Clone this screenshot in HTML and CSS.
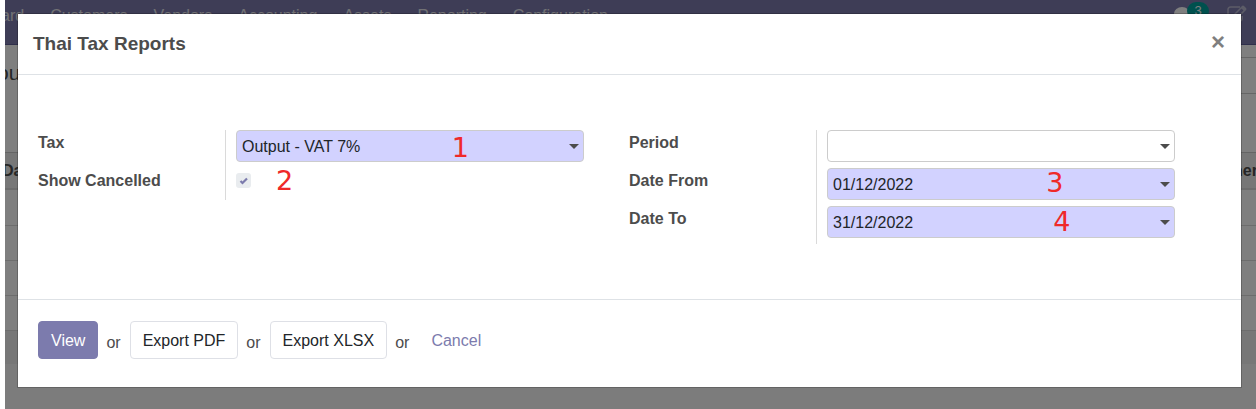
FILE: index.html
```html
<!DOCTYPE html>
<html lang="en">
<head>
<meta charset="utf-8">
<title>Thai Tax Reports</title>
<link rel="stylesheet" href="styles.css">
</head>
<body>
<div class="app">
  <header class="navbar">
    <nav class="menu">
      <span>ard</span><span>Customers</span><span>Vendors</span><span>Accounting</span><span>Assets</span><span>Reporting</span><span>Configuration</span>
    </nav>
    <div class="systray">
      <svg class="chat" viewBox="0 0 18 14" width="18" height="14" aria-hidden="true"><ellipse cx="8" cy="6.5" rx="8" ry="6.5" fill="#fff"/></svg>
      <span class="badge">3</span>
      <svg class="edit" viewBox="0 0 20 18" width="20" height="18" aria-hidden="true"><path d="M13 2H3.500a2.500 2.500 0 0 0-2.500 2.500v9A2.500 2.500 0 0 0 3.500 16h9a2.500 2.500 0 0 0 2.500-2.500V11" fill="none" stroke="#b9b8cf" stroke-width="1.500"/><path d="M8 9l7.500-7.500 3 3L11 12H8z" fill="none" stroke="#b9b8cf" stroke-width="1.500"/><path d="M14 3l3 3 2.500-2.500-3-3z" fill="#b9b8cf"/></svg>
    </div>
  </header>
  <div class="panel"><span class="crumb">ou</span><span class="filter"></span></div>
  <div class="list">
    <div class="list-head"><span class="date">Da</span><span class="partner">ner</span></div>
    <div class="line"></div><div class="line"></div><div class="line"></div><div class="line"></div>
    <div class="list-foot"></div>
  </div>
</div>
<div class="backdrop">
  <form class="modal" role="dialog" aria-labelledby="title">
    <header class="modal-head">
      <h4 id="title">Thai Tax Reports</h4>
      <button type="button" class="close" aria-label="Close">×</button>
    </header>
    <main class="modal-body">
      <div class="group">
        <div class="labels">
          <label for="tax">Tax</label>
          <label for="cancelled">Show Cancelled</label>
        </div>
        <div class="fields short">
          <div class="field"><select id="tax" class="control required"><option>Output - VAT 7%</option></select><span class="mark one">1</span></div>
          <div class="check"><input type="checkbox" id="cancelled" checked><svg viewBox="0 0 15 15" width="15" height="15" aria-hidden="true"><path d="M4.500 8l2 2L11 5.500" fill="none" stroke="#7c7bad" stroke-width="2.200"/></svg><span class="mark two">2</span></div>
        </div>
      </div>
      <div class="group">
        <div class="labels">
          <label for="period">Period</label>
          <label for="from">Date From</label>
          <label for="to">Date To</label>
        </div>
        <div class="fields">
          <div class="field"><select id="period" class="control"><option></option></select></div>
          <div class="field"><input type="text" id="from" class="control required" value="01/12/2022"><span class="mark three">3</span></div>
          <div class="field"><input type="text" id="to" class="control required" value="31/12/2022"><span class="mark four">4</span></div>
        </div>
      </div>
    </main>
    <footer class="modal-foot">
      <button type="button" class="btn primary">View</button>
      <span class="or">or</span>
      <button type="button" class="btn">Export PDF</button>
      <span class="or">or</span>
      <button type="button" class="btn">Export XLSX</button>
      <span class="or">or</span>
      <button type="button" class="btn link">Cancel</button>
    </footer>
  </form>
</div>
</body>
</html>
```

FILE: styles.css
```css
* { box-sizing: border-box; }
body {
  margin: 0;
  min-height: 100vh;
  padding-left: 5px;
  background: #fff;
  color: #4c4c4c;
  font: 16px/24px "Liberation Sans", Arial, sans-serif;
  overflow: hidden;
}
button, input, select { font: inherit; color: inherit; margin: 0; }

.app { height: 100vh; overflow: hidden; background: #f9f9f9; }
.navbar {
  display: flex;
  justify-content: space-between;
  height: 45px;
  overflow: hidden;
  background: #7c7bad;
  border-bottom: 1px solid #5f5e97;
  color: #e4e4ea;
}
.menu { display: flex; gap: 26px; margin-left: -4px; padding-top: 4px; }
.systray { display: flex; align-items: flex-start; padding: 2px 9px 0 0; }
.chat { margin-top: 5px; }
.badge {
  width: 22px;
  height: 18px;
  margin: 0 18px 0 -5px;
  border-radius: 9px;
  background: #00a09d;
  color: #fff;
  font-size: 13px;
  line-height: 18px;
  text-align: center;
}
.edit { margin-top: 3px; }

.panel {
  display: flex;
  justify-content: space-between;
  align-items: flex-start;
  height: 107px;
  padding-top: 12px;
  background: #fff;
}
.crumb { margin-left: -8px; padding-top: 4px; font-size: 21px; }
.filter { width: 40px; height: 37px; border: solid #ccc; border-width: 1px 0; }
.list-head {
  display: flex;
  justify-content: space-between;
  height: 38px;
  padding-top: 6px;
  overflow: hidden;
  background: #eee;
  border-top: 1px solid #cacaca;
  border-bottom: 2px solid #dadada;
  font-weight: bold;
}
.date { margin-left: -3px; }
.partner { margin-right: -2px; }
.line { height: 35px; background: #fff; border-bottom: 1px solid #dadada; }
.line:nth-child(2) { height: 36px; }
.list-foot { height: 33px; background: #eee; }

.backdrop {
  position: absolute;
  inset: 0 0 0 5px;
  padding: 13px 14px 21px 12px;
  background: rgba(0, 0, 0, 0.5);
}
.modal {
  display: flex;
  flex-direction: column;
  height: 100%;
  background: #fff;
  background-clip: padding-box;
  border: 1px solid rgba(0, 0, 0, 0.2);
}
.modal-head {
  display: flex;
  justify-content: space-between;
  align-items: flex-start;
  padding: 15px;
  border-bottom: 1px solid #dee2e6;
}
h4 { margin: 0; font-size: 19px; line-height: 30px; }
.close {
  padding: 0 1px;
  border: 0;
  background: none;
  color: #7f7f7f;
  font-size: 24px;
  font-weight: bold;
  line-height: 26px;
}
.modal-body {
  flex: 1;
  display: grid;
  grid-template-columns: 1fr 1fr;
  gap: 45px;
  align-items: start;
  padding: 55px 66px 55px 20px;
}
.group { display: grid; grid-template-columns: 187px 1fr; align-items: start; }
.labels { display: grid; grid-auto-rows: 38px; line-height: 26px; font-weight: bold; }
.fields {
  display: grid;
  grid-auto-rows: 32px;
  gap: 6px;
  padding: 0 0 6px 10px;
  border-left: 1px solid #dadada;
}
.short { padding-bottom: 0; }
.field { position: relative; }
.field::after {
  content: "";
  position: absolute;
  right: 5px;
  top: 14px;
  border: solid transparent;
  border-width: 5px 5px 0;
  border-top-color: #4c4c4c;
  pointer-events: none;
}
.control {
  appearance: none;
  display: block;
  width: 100%;
  height: 32px;
  padding: 2px 5px 0;
  border: 1px solid #ccc;
  border-radius: 4px;
  background: #fff;
  color: #212529;
}
.required { background: #d2d2ff; }
.check { position: relative; padding-top: 5px; }
.check input {
  appearance: none;
  display: block;
  width: 15px;
  height: 15px;
  border-radius: 3px;
  background: #e9ecef;
}
.check svg { position: absolute; left: 0; top: 5px; pointer-events: none; }
.mark {
  position: absolute;
  color: #ef2929;
  font: 27px/32px "DejaVu Sans", sans-serif;
  pointer-events: none;
}
.one { top: 2px; left: 62%; }
.two { top: -3px; left: 40px; }
.three { top: -1px; left: 63%; }
.four { top: 0; left: 65%; }

.modal-foot {
  display: flex;
  gap: 8px;
  padding: 21px 20px 28px;
  border-top: 1px solid #dee2e6;
}
.or { padding: 10px 1px 0 0; }
.btn {
  height: 38px;
  padding: 2px 12px 0;
  border: 1px solid #dee0e6;
  border-radius: 4px;
  background: #fff;
  color: #212529;
}
.primary { border-color: #7c7bad; background: #7c7bad; color: #fff; }
.link { border-color: transparent; background: none; color: #7c7bad; }
```
